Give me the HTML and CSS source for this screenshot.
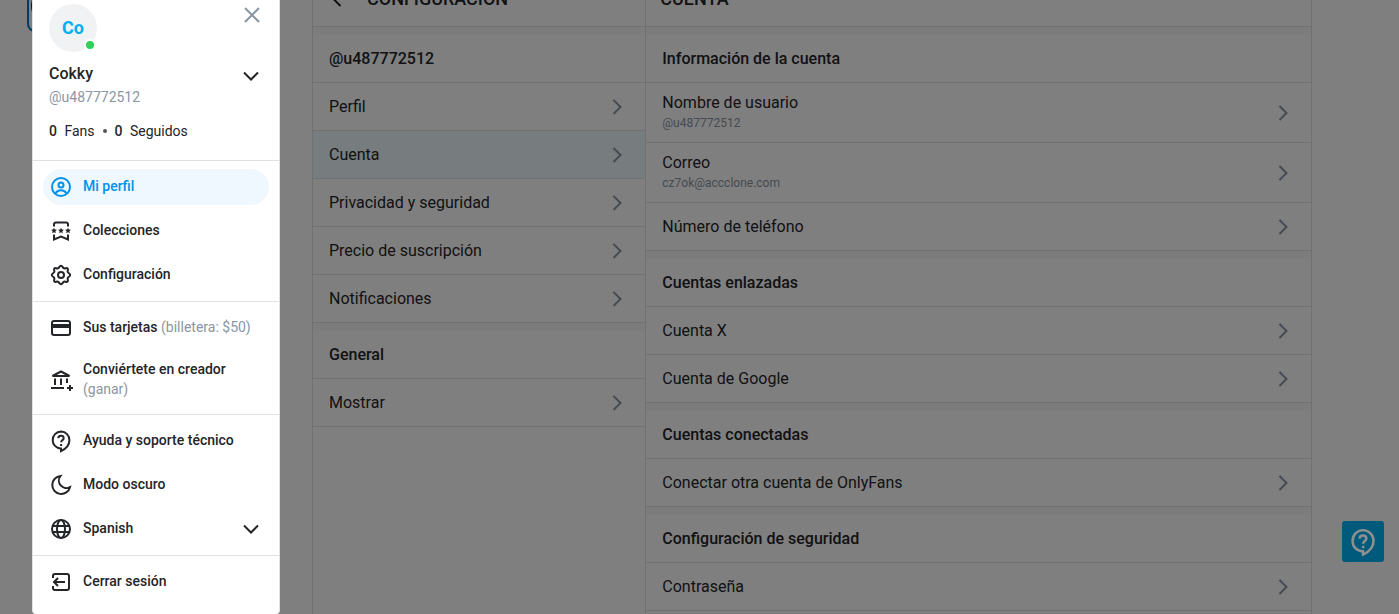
FILE: index.html
```
<!DOCTYPE html>
<html lang="es">
<head>
    <meta charset="UTF-8">
    <meta name="viewport" content="width=device-width, initial-scale=1.0">
    <title>Configuración</title>
    <link rel="stylesheet" href="styles.css">
</head>
<body>
    <!-- Shared icons -->
    <svg class="sprite" aria-hidden="true">
        <symbol id="icon-right" viewBox="0 0 24 24"><path d="M8.5 5l7 7-7 7"/></symbol>
        <symbol id="icon-down" viewBox="0 0 24 24"><path d="M5 8.5l7 7 7-7"/></symbol>
        <symbol id="icon-help" viewBox="0 0 24 24">
            <path d="M12 2.5a8.5 8.5 0 0 0-8.3 8.8c0 4.4 3.3 7.9 7.9 8.1h.4v2.7c4.5-2.1 8.4-6 8.4-10.9A8.5 8.5 0 0 0 12 2.5z"/>
            <path d="M9.3 9.3c0-1.6 1.2-2.5 2.7-2.5s2.7 1 2.7 2.4c0 1.9-2.6 2-2.6 4.1M12.1 14.9v2"/>
        </symbol>
    </svg>

    <button class="account-button" type="button" aria-label="Menú"><span></span></button>

    <main class="settings">
        <section class="column">
            <header class="column-header">
                <a class="back" href="#" aria-label="Volver">
                    <svg class="icon" viewBox="0 0 24 24"><path d="M15.5 5l-7 7 7 7"/></svg>
                </a>
                <h1>Configuración</h1>
            </header>
            <h2>@u487772512</h2>
            <a class="row" href="#">Perfil <svg class="icon"><use href="#icon-right"/></svg></a>
            <a class="row selected" href="#">Cuenta <svg class="icon"><use href="#icon-right"/></svg></a>
            <a class="row" href="#">Privacidad y seguridad <svg class="icon"><use href="#icon-right"/></svg></a>
            <a class="row" href="#">Precio de suscripción <svg class="icon"><use href="#icon-right"/></svg></a>
            <a class="row" href="#">Notificaciones <svg class="icon"><use href="#icon-right"/></svg></a>
            <h2>General</h2>
            <a class="row" href="#">Mostrar <svg class="icon"><use href="#icon-right"/></svg></a>
        </section>

        <section class="column column-wide">
            <header class="column-header">
                <h1>Cuenta</h1>
            </header>
            <h2>Información de la cuenta</h2>
            <a class="row row-tall" href="#">
                <span>Nombre de usuario <small>@u487772512</small></span>
                <svg class="icon"><use href="#icon-right"/></svg>
            </a>
            <a class="row row-tall" href="#">
                <span>Correo <small>cz7ok@accclone.com</small></span>
                <svg class="icon"><use href="#icon-right"/></svg>
            </a>
            <a class="row" href="#">Número de teléfono <svg class="icon"><use href="#icon-right"/></svg></a>
            <h2>Cuentas enlazadas</h2>
            <a class="row" href="#">Cuenta X <svg class="icon"><use href="#icon-right"/></svg></a>
            <a class="row" href="#">Cuenta de Google <svg class="icon"><use href="#icon-right"/></svg></a>
            <h2>Cuentas conectadas</h2>
            <a class="row" href="#">Conectar otra cuenta de OnlyFans <svg class="icon"><use href="#icon-right"/></svg></a>
            <h2>Configuración de seguridad</h2>
            <a class="row" href="#">Contraseña <svg class="icon"><use href="#icon-right"/></svg></a>
        </section>
    </main>

    <div class="overlay"></div>

    <button class="help-button" type="button" aria-label="Ayuda">
        <svg class="icon"><use href="#icon-help"/></svg>
    </button>

    <aside class="drawer">
        <div class="profile">
            <div class="profile-top">
                <div class="avatar">Co<span class="online"></span></div>
                <button class="icon-button close" type="button" aria-label="Cerrar">
                    <svg class="icon" viewBox="0 0 24 24"><path d="M6 4l14 14M20 4L6 18"/></svg>
                </button>
            </div>
            <div class="profile-name">
                <div>
                    <div class="name">Cokky</div>
                    <div class="username">@u487772512</div>
                </div>
                <button class="icon-button" type="button" aria-label="Cuentas">
                    <svg class="icon"><use href="#icon-down"/></svg>
                </button>
            </div>
            <div class="stats">
                <a href="#"><b>0</b> Fans</a>
                <span class="dot"></span>
                <a href="#"><b>0</b> Seguidos</a>
            </div>
        </div>

        <nav class="menu">
            <a class="item active" href="#">
                <svg class="icon" viewBox="0 0 24 24"><circle cx="12" cy="12" r="9"/><circle cx="12" cy="10" r="2.5"/><path d="M6.5 18.5c1-2.2 3-3.2 5.5-3.2s4.5 1 5.5 3.2"/></svg>
                <span>Mi perfil</span>
            </a>
            <a class="item" href="#">
                <svg class="icon" viewBox="0 0 24 24"><path d="M5 7.5v-2a2 2 0 0 1 2-2h10a2 2 0 0 1 2 2v2M5 15.5v5l7-3 7 3v-5"/><path class="solid" d="M5 8.8l.9 1.700 2 .3-1.500 1.400.4 2-1.800-.9-1.800.9.400-2-1.500-1.400 2-.3zM12 8.800l.9 1.700 2 .3-1.500 1.400.4 2-1.800-.9-1.800.9.400-2-1.500-1.400 2-.3zM19 8.800l.9 1.700 2 .3-1.500 1.400.4 2-1.800-.9-1.800.9.400-2-1.500-1.400 2-.3z"/></svg>
                <span>Colecciones</span>
            </a>
            <a class="item" href="#">
                <svg class="icon" viewBox="0 0 24 24"><circle cx="12" cy="12" r="3"/><path d="M12 2.800c1.600 0 1.700 2 3 2.500 1.300.5 2.500-.9 3.600.1 1.100 1.100-.4 2.300.1 3.600.5 1.300 2.500 1.400 2.500 3s-2 1.700-2.500 3c-.5 1.300 1 2.500-.1 3.600-1.100 1-2.300-.4-3.600.1-1.300.5-1.400 2.500-3 2.500s-1.700-2-3-2.500c-1.300-.5-2.500.9-3.600-.1-1.100-1.100.4-2.300-.1-3.600-.5-1.300-2.500-1.400-2.500-3s2-1.700 2.500-3c.5-1.300-1-2.500.1-3.600 1.100-1 2.300.4 3.600-.1 1.300-.5 1.400-2.500 3-2.500z"/></svg>
                <span>Configuración</span>
            </a>
        </nav>

        <nav class="menu">
            <a class="item" href="#">
                <svg class="icon" viewBox="0 0 24 24"><rect x="3" y="5" width="18" height="14" rx="2"/><path class="solid" d="M3 8h18v4H3z"/></svg>
                <span>Sus tarjetas <i>(billetera: $50)</i></span>
            </a>
            <a class="item" href="#">
                <svg class="icon" viewBox="0 0 24 24"><path d="M3.500 8L12 3.500 20.500 8zM2 20h13M6 10.500V17M12 10.500V17M18 10.500V15M21 17v6M18 20h6"/></svg>
                <span>Conviértete en creador <i>(ganar)</i></span>
            </a>
        </nav>

        <nav class="menu">
            <a class="item" href="#">
                <svg class="icon"><use href="#icon-help"/></svg>
                <span>Ayuda y soporte técnico</span>
            </a>
            <a class="item" href="#">
                <svg class="icon" viewBox="0 0 24 24"><path d="M11.500 3A9 9 0 1 0 21 14.200 7.500 7.500 0 0 1 11.500 3z"/></svg>
                <span>Modo oscuro</span>
            </a>
            <a class="item" href="#">
                <svg class="icon" viewBox="0 0 24 24"><circle cx="12" cy="12" r="9"/><ellipse cx="12" cy="12" rx="4" ry="9"/><path d="M4 9h16M4 15h16"/></svg>
                <span>Spanish</span>
                <svg class="icon"><use href="#icon-down"/></svg>
            </a>
        </nav>

        <nav class="menu">
            <a class="item" href="#">
                <svg class="icon" viewBox="0 0 24 24"><path d="M4 8V6a2 2 0 0 1 2-2h12a2 2 0 0 1 2 2v12a2 2 0 0 1-2 2H6a2 2 0 0 1-2-2v-2M16 12H5M9 8l-4 4 4 4"/></svg>
                <span>Cerrar sesión</span>
            </a>
        </nav>
    </aside>
</body>
</html>
```
FILE: styles.css
```
* {
    box-sizing: border-box;
}
body {
    margin: 0;
    height: 100vh;
    overflow: hidden;
    background-color: #fff;
    color: #242529;
    font-family: Roboto, sans-serif;
    font-size: 16px;
    line-height: 20px;
}
a {
    color: inherit;
    text-decoration: none;
}
button {
    padding: 0;
    border: none;
    background: none;
    color: inherit;
    font: inherit;
    cursor: pointer;
}
.sprite {
    display: none;
}
.icon {
    flex: none;
    display: block;
    width: 24px;
    height: 24px;
    fill: none;
    stroke: currentColor;
    stroke-width: 2;
}
.icon .solid {
    fill: currentColor;
    stroke: none;
}

/* Settings page, scrolled a little under the top edge */
.settings {
    display: flex;
    min-height: calc(100vh + 32px);
    margin: -32px 87px 0 312px;
    border-right: 1px solid #e3e3e3;
}
.column {
    flex: 1;
    border-left: 1px solid #e3e3e3;
}
.column-wide {
    flex: 2;
}
.column-header {
    display: flex;
    align-items: center;
    gap: 18px;
    height: 59px;
    padding: 4px 14px 0;
    border-bottom: 1px solid #e3e3e3;
}
.column-header .back {
    margin-left: -2px;
}
h1 {
    margin: 0;
    font-size: 18px;
    font-weight: 500;
    text-transform: uppercase;
}
h2 {
    display: flex;
    align-items: center;
    height: 56px;
    margin: 0;
    padding: 0 16px;
    border-top: 8px solid #f8f8f8;
    border-bottom: 1px solid #e3e3e3;
    font-size: 16px;
    font-weight: 500;
}
.row {
    display: flex;
    align-items: center;
    justify-content: space-between;
    height: 48px;
    padding: 0 16px;
    border-bottom: 1px solid #e3e3e3;
}
.row-tall {
    height: 60px;
}
.row small {
    display: block;
    color: #8a96a3;
    font-size: 12px;
}
.row .icon {
    color: #8a96a3;
}
.selected {
    background-color: #eff8fe;
}
.account-button {
    position: absolute;
    top: -20px;
    left: 27px;
    width: 52px;
    height: 52px;
    padding: 2px;
    border: 2px solid #0078c8;
    border-radius: 8px;
}
.account-button span {
    display: block;
    height: 100%;
    border-radius: 50%;
    background-color: #242529;
}
.overlay {
    position: fixed;
    inset: 0;
    background-color: rgba(0, 0, 0, 0.5);
}
.help-button {
    position: fixed;
    right: 15px;
    bottom: 52px;
    display: flex;
    align-items: center;
    justify-content: center;
    width: 42px;
    height: 41px;
    border-radius: 3px;
    background-color: #005a7c;
    color: #909090;
}
.help-button .icon {
    width: 30px;
    height: 30px;
}

/* Drawer */
.drawer {
    position: fixed;
    top: 0;
    bottom: 0;
    left: 32px;
    width: 248px;
    border: 1px solid #dee2e7;
    border-top: none;
    border-bottom: none;
    border-radius: 0 0 4px 4px;
    background-color: #fff;
    font-size: 14px;
}
.profile {
    height: 160px;
    padding: 4px 16px 0;
}
.profile-top,
.profile-name {
    display: flex;
    justify-content: space-between;
}
.avatar {
    position: relative;
    width: 48px;
    height: 48px;
    border-radius: 50%;
    background-color: #f0f2f4;
    color: #00aff0;
    font-size: 18px;
    font-weight: 700;
    line-height: 48px;
    text-align: center;
}
.online {
    position: absolute;
    right: 1px;
    bottom: 1px;
    width: 12px;
    height: 12px;
    border: 2px solid #fff;
    border-radius: 50%;
    background-color: #30d158;
}
.close {
    align-self: flex-start;
    color: #8a96a3;
}
.profile-name {
    align-items: center;
    padding-top: 10px;
}
.profile-name .icon-button {
    align-self: flex-start;
    padding-top: 2px;
}
.name {
    font-size: 16px;
    font-weight: 500;
    line-height: 24px;
}
.username {
    color: #8a96a3;
    line-height: 22px;
}
.stats {
    display: flex;
    align-items: center;
    gap: 8px;
    padding-top: 13px;
}
.stats b {
    margin-right: 4px;
    font-weight: 500;
}
.dot {
    width: 4px;
    height: 4px;
    border-radius: 50%;
    background-color: #55565a;
}
.menu {
    display: flex;
    flex-direction: column;
    gap: 8px;
    padding: 8px 10px;
    border-top: 1px solid #dee2e7;
}
.item {
    display: flex;
    align-items: center;
    gap: 10px;
    min-height: 36px;
    padding: 5px 6px;
    border-radius: 18px;
    font-weight: 500;
}
.item span {
    flex: 1;
    padding-bottom: 2px;
}
.item i {
    color: #8a96a3;
    font-style: normal;
    font-weight: 400;
}
.active {
    background-color: #eff8fe;
    color: #0091ea;
}
```
